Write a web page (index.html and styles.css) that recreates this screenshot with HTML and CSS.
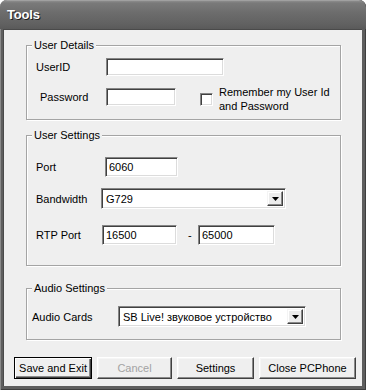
FILE: index.html
```html
<!DOCTYPE html>
<html>
<head>
<meta charset="utf-8">
<title>Tools</title>
<link rel="stylesheet" href="styles.css">
</head>
<body>
<div class="window">
  <div class="titlebar"><span class="title">Tools</span></div>
  <div class="client">
    <div class="group g-details">
      <span class="legend">User Details</span>
      <div class="row r-userid">
        <span class="lbl lbl-userid">UserID</span>
        <input class="edit w-userid" type="text" value="">
      </div>
      <div class="row r-pass">
        <span class="lbl lbl-pass">Password</span>
        <input class="edit w-pass" type="password" value="">
        <label class="remember">
          <span class="check"></span>
          <span class="check-text">Remember my User Id<br>and Password</span>
        </label>
      </div>
    </div>

    <div class="group g-settings">
      <span class="legend">User Settings</span>
      <div class="row r-port">
        <span class="lbl lbl-port">Port</span>
        <input class="edit w-port" type="text" value="6060">
      </div>
      <div class="row r-bw">
        <span class="lbl lbl-bw">Bandwidth</span>
        <div class="combo w-bw">
          <span class="combo-text">G729</span>
          <span class="combo-btn"><svg width="7" height="4" viewBox="0 0 7 4"><polygon points="0,0 7,0 3.5,4" fill="#000"/></svg></span>
        </div>
      </div>
      <div class="row r-rtp">
        <span class="lbl lbl-rtp">RTP Port</span>
        <input class="edit w-rtp1" type="text" value="16500">
        <span class="dash">-</span>
        <input class="edit w-rtp2" type="text" value="65000">
      </div>
    </div>

    <div class="group g-audio">
      <span class="legend">Audio Settings</span>
      <div class="row r-audio">
        <span class="lbl lbl-audio">Audio Cards</span>
        <div class="combo w-audio">
          <span class="combo-text">SB Live! звуковое устройство</span>
          <span class="combo-btn"><svg width="7" height="4" viewBox="0 0 7 4"><polygon points="0,0 7,0 3.5,4" fill="#000"/></svg></span>
        </div>
      </div>
    </div>

    <div class="buttons">
      <button class="btn btn-default b-save">Save and Exit</button>
      <button class="btn b-cancel" disabled>Cancel</button>
      <button class="btn b-settings">Settings</button>
      <button class="btn b-close">Close PCPhone</button>
    </div>
  </div>
</div>
</body>
</html>
```

FILE: styles.css
```css
* { box-sizing: border-box; }

html, body {
  margin: 0;
  padding: 0;
  background: #ffffff;
}

body {
  font-family: "Liberation Sans", Arial, sans-serif;
  font-size: 11px;
  color: #000;
}

.window {
  width: 366px;
  height: 390px;
  display: flex;
  flex-direction: column;
  background: #5e5e5e;
  border-radius: 7px 7px 0 0;
  overflow: hidden;
  box-shadow: inset 1px 0 #8a8a8a, inset -1px 0 #3e3e3e, inset 0 -1px #3e3e3e;
}

.titlebar {
  flex: none;
  height: 29px;
  display: flex;
  align-items: center;
  padding: 0 0 1px 7px;
  background: linear-gradient(#b4b4b4 0, #8c8c8c 1px, #7a7a7a 3px, #6c6c6c 45%, #626262 80%, #5a5a5a 100%);
  border-radius: 7px 7px 0 0;
}

.title {
  color: #fff;
  font-weight: bold;
  font-size: 13px;
  letter-spacing: -0.2px;
  text-shadow: 1px 1px 0 #1e1e1e;
}

.client {
  flex: 1;
  margin: 0 4px 4px 3px;
  background: #efefef;
  display: flex;
  flex-direction: column;
  padding: 16px 0 0 23px;
  box-shadow: inset 1px 1px #4a4a4a;
}

.group {
  position: relative;
  flex: none;
  width: 315px;
  border: 1px solid #a4a4a4;
  box-shadow: inset 1px 1px #ffffff, 1px 1px #ffffff;
  display: flex;
  flex-direction: column;
  padding-left: 9px;
}

.legend {
  position: absolute;
  top: -7px;
  left: 5px;
  padding: 0 2px;
  line-height: 13px;
  background: #efefef;
}

.g-details { height: 75px; padding-top: 12px; }
.g-settings { height: 131px; margin-top: 15px; padding-top: 21px; }
.g-audio { height: 52px; margin-top: 22px; padding-top: 17px; padding-left: 5px; }

.row {
  display: flex;
  align-items: center;
  flex: none;
}

.lbl { flex: none; white-space: nowrap; }

.r-userid { height: 18px; }
.lbl-userid { width: 70px; }
.w-userid { width: 118px; height: 18px; }

.r-pass { margin-top: 5px; }
.lbl-pass { width: 66px; margin-left: 4px; }
.w-pass { width: 70px; height: 18px; }

.remember {
  display: flex;
  align-items: center;
  margin: 4px 0 0 24px;
}

.check {
  flex: none;
  width: 13px;
  height: 13px;
  background: #fff;
  border: 1px solid;
  border-color: #858585 #ffffff #ffffff #858585;
  box-shadow: inset 1px 1px #404040, inset -1px -1px #dcdcdc;
}

.check-text {
  margin-left: 6px;
  line-height: 14px;
}

.r-port { height: 20px; }
.lbl-port { width: 69px; }
.w-port { width: 73px; height: 20px; }

.r-bw { height: 21px; margin-top: 11px; }
.lbl-bw { width: 65px; }
.w-bw { width: 185px; height: 21px; }

.r-rtp { height: 20px; margin-top: 16px; }
.lbl-rtp { width: 66px; }
.w-rtp1 { width: 75px; height: 20px; }
.w-rtp2 { width: 77px; height: 20px; }
.dash {
  width: 21px;
  padding-left: 11px;
  flex: none;
}

.r-audio { height: 21px; }
.lbl-audio { width: 86px; }
.w-audio { width: 188px; height: 21px; }

.edit {
  flex: none;
  margin: 0;
  padding: 0 0 0 3px;
  font: inherit;
  font-size: 11px;
  color: #000;
  background: #fff;
  border: 1px solid;
  border-color: #858585 #ffffff #ffffff #858585;
  box-shadow: inset 1px 1px #404040, inset -1px -1px #dcdcdc;
  outline: none;
}

.combo {
  flex: none;
  display: flex;
  align-items: stretch;
  background: #fff;
  border: 1px solid;
  border-color: #858585 #ffffff #ffffff #858585;
  box-shadow: inset 1px 1px #404040, inset -1px -1px #dcdcdc;
  padding: 2px 2px 2px 2px;
}

.combo-text {
  flex: 1;
  display: flex;
  align-items: center;
  padding-left: 2px;
  font-size: 11px;
  white-space: nowrap;
  overflow: hidden;
}

.combo-btn {
  flex: none;
  width: 16px;
  display: flex;
  align-items: center;
  justify-content: center;
  background: #ececec;
  border: 1px solid;
  border-color: #f4f4f4 #404040 #404040 #f4f4f4;
  box-shadow: inset -1px -1px #888888, inset 1px 1px #ffffff;
}

.buttons {
  display: flex;
  gap: 5px;
  margin: 17px 0 0 -12px;
  height: 22px;
}

.btn {
  margin: 0;
  padding: 0;
  height: 22px;
  font: inherit;
  font-size: 11px;
  color: #000;
  background: #efefef;
  border: 1px solid;
  border-color: #ffffff #404040 #404040 #ffffff;
  box-shadow: inset -1px -1px #8a8a8a, inset 1px 1px #f6f6f6;
}

.btn-default {
  border: 1px solid #000;
  box-shadow: inset 1px 1px #ffffff, inset -1px -1px #404040, inset -2px -2px #8a8a8a;
}

.btn:disabled { color: #a3a3a3; }

.b-save { width: 78px; }
.b-cancel { width: 75px; }
.b-settings { width: 77px; }
.b-close { width: 97px; }
```
